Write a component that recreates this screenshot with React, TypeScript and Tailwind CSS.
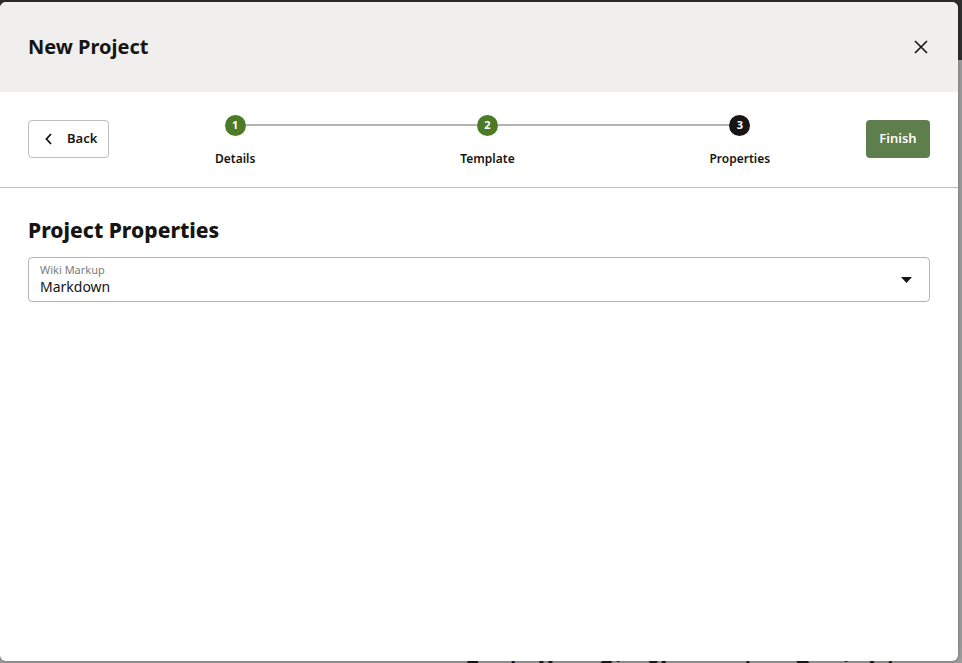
import React from "react";

const font = { fontFamily: '"Noto Sans", "Open Sans", Arial, sans-serif' };

function Step({ n, label, first, last, current }: { n: number; label: string; first?: boolean; last?: boolean; current?: boolean }) {
  return (
    <div className="flex flex-col items-center">
      <div className="flex w-full items-center">
        <div className={`h-[2px] flex-1 ${first ? "bg-transparent" : "bg-[#b3b3b3]"}`} />
        <div
          className={`flex h-[21px] w-[21px] items-center justify-center rounded-full text-[11px] font-bold text-white ${current ? "bg-[#161513]" : "bg-[#4d7a27]"}`}
        >
          {n}
        </div>
        <div className={`h-[2px] flex-1 ${last ? "bg-transparent" : "bg-[#b3b3b3]"}`} />
      </div>
      <div className="mt-[15px] text-[12px] font-semibold leading-[16px] text-[#161513]">{label}</div>
    </div>
  );
}

export default function App() {
  return (
    <div className="relative h-[663px] w-[962px] overflow-hidden bg-[#9c9c9c]" style={font}>
      <div className="h-[60px] w-full bg-[#2e2e2e]" />
      <div className="absolute left-[465px] top-[656px] text-[26px] font-bold leading-none tracking-wider text-[#1a1a1a]">
        Erstellen Sie Ihr erstes Projekt
      </div>
      <div className="absolute left-0 top-[2px] flex h-[659px] w-[958px] flex-col overflow-hidden rounded-[6px] bg-white shadow-[0_0_4px_rgba(0,0,0,0.3)]">
        <div className="flex h-[90px] shrink-0 items-center justify-between bg-[#f1efed] pl-[28px] pr-[30px]">
          <div className="text-[20px] font-bold leading-[28px] text-[#161513]">New Project</div>
          <svg width="14" height="14" viewBox="0 0 14 14" className="text-[#161513]">
            <path d="M1 1L13 13M13 1L1 13" stroke="currentColor" strokeWidth="1.6" fill="none" />
          </svg>
        </div>
        <div className="flex h-[96px] shrink-0 items-center border-b border-[#bfbfbf] px-[28px] pb-[2px]">
          <button className="flex h-[38px] w-[81px] items-center rounded-[4px] border border-[#bdbdbd] bg-white pl-[16px] text-[13px] font-semibold text-[#161513]">
            <svg width="8" height="12" viewBox="0 0 8 12" className="mr-[14px]">
              <path d="M6 1L1.5 6L6 11" stroke="#161513" strokeWidth="1.8" fill="none" />
            </svg>
            Back
          </button>
          <div className="grid flex-1 grid-cols-3 pt-[4px]">
            <Step n={1} label="Details" first />
            <Step n={2} label="Template" />
            <Step n={3} label="Properties" last current />
          </div>
          <button className="flex h-[38px] w-[64px] items-center justify-center rounded-[4px] bg-[#5e7e4c] text-[13px] font-semibold text-white">
            Finish
          </button>
        </div>
        <div className="px-[28px] pt-[27px]">
          <div className="text-[21px] font-extrabold leading-[30px] text-[#161513]">Project Properties</div>
          <div className="mt-[12px] flex h-[45px] items-center rounded-[4px] border border-[#b5b5b5] pl-[11px] pr-[17px]">
            <div className="flex flex-1 flex-col">
              <div className="text-[11px] leading-[13px] text-[#7d7b79]">Wiki Markup</div>
              <div className="mt-[2px] text-[14px] leading-[18px] text-[#161513]">Markdown</div>
            </div>
            <svg width="11" height="6" viewBox="0 0 11 6">
              <path d="M0 0H11L5.5 6Z" fill="#161513" />
            </svg>
          </div>
        </div>
      </div>
    </div>
  );
}
